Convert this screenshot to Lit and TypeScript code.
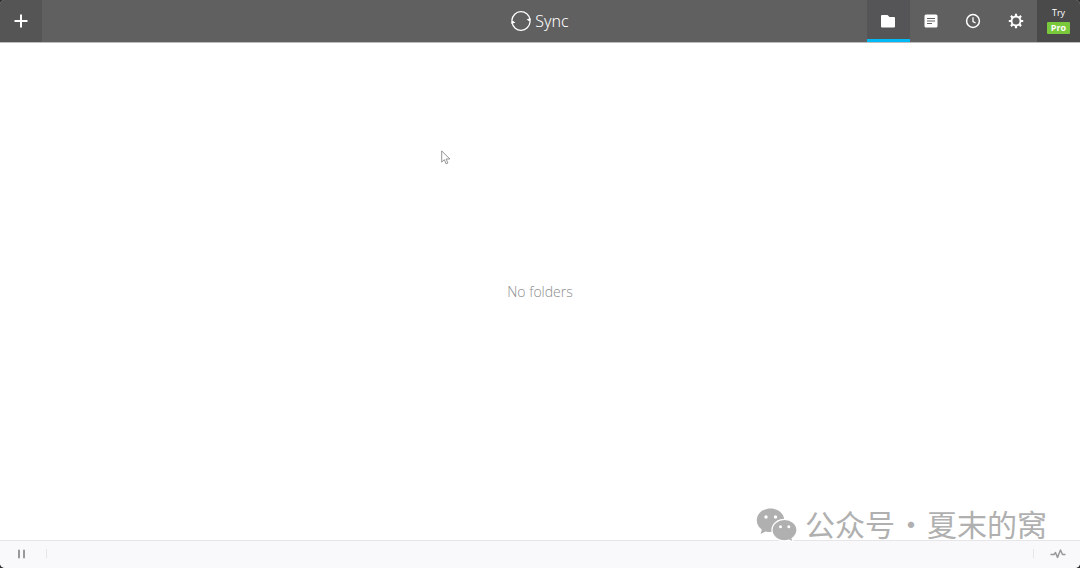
import { LitElement, html, css } from "lit";
import { customElement, state } from "lit/decorators.js";

@customElement("app-root")
export class AppRoot extends LitElement {
  static styles = css`
    :host {
      display: block;
      height: 100vh;
      background: #303030;
      font-family: "Open Sans", "Noto Sans", sans-serif;
    }
    .window {
      position: relative;
      display: flex;
      flex-direction: column;
      height: 100%;
      overflow: hidden;
      border-radius: 5px;
      background: #fff;
    }
    button {
      display: flex;
      align-items: center;
      justify-content: center;
      margin: 0;
      padding: 0;
      border: 0;
      background: none;
      color: #fff;
      font: inherit;
    }
    svg {
      display: block;
    }
    .bar {
      display: grid;
      grid-template-columns: 1fr auto 1fr;
      height: 42px;
      flex: none;
      background: #606060;
      border-bottom: 1px solid #bdbdbd;
    }
    .add {
      width: 42px;
      background: #555;
    }
    .brand {
      display: flex;
      align-items: center;
      gap: 4px;
      margin: 0;
      color: #fff;
      font-family: "Noto Sans", sans-serif;
      font-size: 16px;
      font-weight: 300;
      line-height: 24px;
    }
    .actions {
      display: flex;
      justify-content: flex-end;
    }
    .tabs {
      display: flex;
      width: 170px;
    }
    .tab {
      flex: 1;
      padding-bottom: 1px;
    }
    .tab.active {
      background: #555557;
      box-shadow: inset 0 -3px #00baf8;
    }
    .pro {
      flex-direction: column;
      gap: 3px;
      width: 43px;
      padding-bottom: 2px;
      background: #4a4a4a;
      font-size: 9px;
      line-height: 12px;
    }
    .badge {
      padding: 0 4px;
      border-radius: 1px;
      background: #7ac83c;
      font-weight: 700;
    }
    main {
      display: flex;
      flex: 1;
      align-items: center;
      justify-content: center;
    }
    .empty {
      margin: 0;
      color: #8c8c8c;
      font-size: 14px;
      font-weight: 300;
      line-height: 20px;
    }
    .status {
      display: flex;
      align-items: center;
      justify-content: space-between;
      height: 25px;
      padding-bottom: 2px;
      flex: none;
      border-top: 1px solid #e6e6e8;
      background: #f9f9fb;
    }
    .status button {
      box-sizing: border-box;
      width: 47px;
      height: 9px;
      color: #999;
    }
    .status .pause {
      padding-right: 2px;
      border-right: 1px solid #e6e6e8;
    }
    .status .activity {
      padding-left: 2px;
      border-left: 1px solid #e6e6e8;
    }
    .pointer {
      position: absolute;
      left: 441px;
      top: 150px;
    }
    .mark {
      position: absolute;
      right: 33px;
      bottom: 23px;
      display: flex;
      align-items: center;
      gap: 7px;
      color: #b0b0b0;
      font-family: "Noto Sans CJK SC", sans-serif;
      font-size: 30px;
      line-height: 36px;
      white-space: nowrap;
    }
    .names {
      display: flex;
      gap: 1px;
      padding-bottom: 4px;
    }
  `;

  @state() private active = "folders";

  private icon(name: string) {
    if (name === "folders")
      return html`<svg width="16" height="16" viewBox="0 0 16 16" fill="currentColor" aria-hidden="true">
        <path d="M2 2h5.500l2 2H14q1 0 1 1v8.500q0 1-1 1H2q-1 0-1-1V3q0-1 1-1z" />
      </svg>`;
    if (name === "history")
      return html`<svg width="16" height="16" viewBox="0 0 16 16" aria-hidden="true">
        <rect x="1.500" y="1.500" width="13" height="13" rx="1.500" fill="#fff" />
        <path d="M4 5.500h8M4 8h8M4 10.500h5" stroke="#606060" stroke-width="1.200" />
      </svg>`;
    if (name === "recent")
      return html`<svg width="16" height="16" viewBox="0 0 16 16" fill="none" stroke="currentColor" stroke-width="1.500" aria-hidden="true">
        <circle cx="8" cy="8" r="6.400" />
        <path d="M8 4.300v4.200l2.600 1.500" stroke-width="1.300" />
      </svg>`;
    return html`<svg width="16" height="16" viewBox="0 0 16 16" fill="none" stroke="currentColor" aria-hidden="true">
      <circle cx="8" cy="8" r="4.500" stroke-width="1.900" />
      <path
        d="M8 .8v2.400M8 12.800v2.400M.8 8h2.400M12.800 8h2.400M2.900 2.900l1.700 1.700M11.400 11.400l1.700 1.700M2.900 13.100l1.700-1.700M11.400 4.600l1.700-1.700"
        stroke-width="2.200"
      />
    </svg>`;
  }

  private tab(name: string, label: string) {
    return html`<button
      class="tab ${this.active === name ? "active" : ""}"
      aria-label=${label}
      @click=${() => (this.active = name)}
    >
      ${this.icon(name)}
    </button>`;
  }

  render() {
    return html`<div class="window">
      <header class="bar">
        <button class="add" aria-label="Add folder">
          <svg width="14" height="14" viewBox="0 0 14 14" fill="none" stroke="currentColor" stroke-width="2" aria-hidden="true">
            <path d="M7 .5v13M.5 7h13" />
          </svg>
        </button>
        <h1 class="brand">
          <svg width="20" height="20" viewBox="0 0 20 20" fill="none" stroke="currentColor" stroke-width="1.300" aria-hidden="true">
            <path d="M1 9A9 9 0 0 1 18.900 8.500M19 11A9 9 0 0 1 1.100 11.500" />
            <path d="M15.600 8.200l4.200-1-.2 4.300zM4.400 11.800l-4.200 1 .2-4.300z" fill="currentColor" stroke="none" />
          </svg>
          <span>Sync</span>
        </h1>
        <div class="actions">
          <nav class="tabs">
            ${this.tab("folders", "Folders")} ${this.tab("history", "History")}
            ${this.tab("recent", "Recent")} ${this.tab("settings", "Settings")}
          </nav>
          <button class="pro"><span>Try</span><span class="badge">Pro</span></button>
        </div>
      </header>
      <main><p class="empty">No folders</p></main>
      <footer class="status">
        <button class="pause" aria-label="Pause">
          <svg width="10" height="10" viewBox="0 0 10 10" fill="none" stroke="currentColor" stroke-width="2" stroke-linecap="round" aria-hidden="true">
            <path d="M2 1.500v7M7 1.500v7" />
          </svg>
        </button>
        <button class="activity" aria-label="Activity">
          <svg width="16" height="10" viewBox="0 0 16 10" fill="none" stroke="currentColor" stroke-width="1.500" stroke-linejoin="round" aria-hidden="true">
            <path d="M.5 5.500H4l1.500-2 2 5 3-7.500 2 4.500h3" />
          </svg>
        </button>
      </footer>
      <svg class="pointer" width="11" height="16" viewBox="0 0 11 16" fill="#fff" stroke="#888" stroke-width=".9" aria-hidden="true">
        <path d="M.7.9v11.200l2.600-2.400 1.800 4.100 1.800-.8-1.800-4h3.700z" />
      </svg>
      <div class="mark">
        <svg width="42" height="34" viewBox="0 0 42 34" fill="currentColor" aria-hidden="true">
          <path d="M14.500.5C6.800.5.8 5.500.8 12.400c0 3.800 2 6.900 5 9L4.600 26l5-2.600c1.600.5 3.200.7 4.900.7 8 0 13.800-5.200 13.800-11.800S22.300.5 14.500.5z" />
          <path
            d="M28.600 11.300c-7 0-12.600 4.700-12.600 10.700s5.500 10.800 12.600 10.800c1.600 0 3-.2 4.300-.7l4.200 2-1-3.600c3-2 4.900-5 4.900-8.500 0-6-5.500-10.700-12.400-10.700z"
            stroke="#fff"
            stroke-width="1.300"
          />
          <g fill="#fff">
            <circle cx="10" cy="9" r="1.700" /><circle cx="19.500" cy="9" r="1.700" />
            <circle cx="24.500" cy="18.800" r="1.500" /><circle cx="32.800" cy="18.800" r="1.500" />
          </g>
        </svg>
        <span class="names"><span>公众号</span><span>·</span><span>夏末的窝</span></span>
      </div>
    </div>`;
  }
}
